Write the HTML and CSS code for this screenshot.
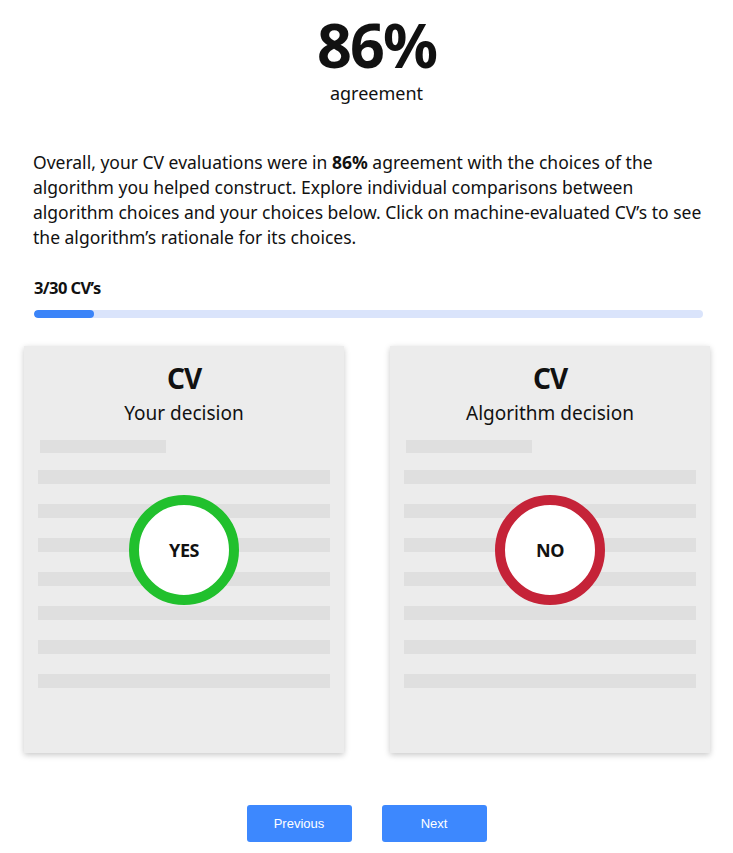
FILE: index.html
```html
<!DOCTYPE html>
<html>
<head>
<meta charset="utf-8">
<link rel="stylesheet" href="styles.css">
</head>
<body>
<div class="page">
  <header class="score">
    <div class="score-value">86%</div>
    <div class="score-label">agreement</div>
  </header>
  <p class="summary">Overall, your CV evaluations were in <b>86%</b> agreement with the choices of the algorithm you helped construct. Explore individual comparisons between algorithm choices and your choices below. Click on machine-evaluated CV’s to see the algorithm’s rationale for its choices.</p>
  <section class="progress">
    <div class="progress-label">3/30 CV’s</div>
    <div class="progress-track"><div class="progress-fill" style="width:9%"></div></div>
  </section>
  <section class="cards">
    <div class="card">
      <div class="card-title">CV</div>
      <div class="card-sub">Your decision</div>
      <div class="line short"></div>
      <div class="lines">
        <div class="line"></div><div class="line"></div><div class="line"></div><div class="line"></div><div class="line"></div><div class="line"></div><div class="line"></div>
      </div>
      <div class="badge yes">YES</div>
    </div>
    <div class="card">
      <div class="card-title">CV</div>
      <div class="card-sub">Algorithm decision</div>
      <div class="line short"></div>
      <div class="lines">
        <div class="line"></div><div class="line"></div><div class="line"></div><div class="line"></div><div class="line"></div><div class="line"></div><div class="line"></div>
      </div>
      <div class="badge no">NO</div>
    </div>
  </section>
  <nav class="buttons">
    <button class="btn">Previous</button>
    <button class="btn">Next</button>
  </nav>
</div>
</body>
</html>
```
FILE: styles.css
```css
* { box-sizing: border-box; }
body {
  margin: 0;
  font-family: "Noto Sans", "Lato", sans-serif;
  color: #111;
  background: #fff;
}
.page { width: 733px; }
.score { text-align: center; padding: 8px 0 0 20px; }
.score-value {
  font-size: 61px;
  font-weight: 700;
  line-height: 74px;
  letter-spacing: -2px;
}
.score-label { font-size: 18px; line-height: 22px; }
.summary {
  margin: 46px 30px 0 33px;
  font-size: 17.5px;
  line-height: 25px;
}
.progress { padding: 27px 30px 0 34px; }
.progress-label { font-size: 16.5px; font-weight: 700; line-height: 22px; letter-spacing: -0.6px; }
.progress-track {
  margin-top: 11px;
  height: 8px;
  border-radius: 4px;
  background: #dae4fb;
  overflow: hidden;
}
.progress-fill { height: 100%; background: #3b84f8; border-radius: 4px; }
.cards {
  display: flex;
  gap: 46px;
  padding: 28px 0 0 24px;
}
.card {
  position: relative;
  width: 320px;
  height: 407px;
  background: #ececec;
  box-shadow: 0 2px 6px rgba(0,0,0,0.22);
  padding: 16px 14px 0 14px;
  text-align: center;
}
.card-title { font-size: 28px; font-weight: 700; line-height: 32px; letter-spacing: -1px; }
.card-sub { font-size: 19px; line-height: 26px; margin-top: 6px; }
.line { height: 14px; background: #dfdfdf; }
.line.short { width: 126px; height: 13px; margin: 14px 0 0 2px; }
.lines { display: flex; flex-direction: column; gap: 20px; margin-top: 17px; }
.badge {
  position: absolute;
  left: 50%;
  top: 204px;
  transform: translate(-50%, -50%);
  width: 110px;
  height: 110px;
  border-radius: 50%;
  background: #fff;
  display: flex;
  align-items: center;
  justify-content: center;
  font-size: 18px;
  font-weight: 700;
  letter-spacing: -0.5px;
  border: 10px solid;
}
.badge.yes { border-color: #21c02d; }
.badge.no { border-color: #c52338; }
.buttons {
  display: flex;
  justify-content: center;
  gap: 30px;
  padding: 52px 0 0 0;
}
.btn {
  width: 105px;
  height: 37px;
  border: none;
  border-radius: 3px;
  background: #3d88fe;
  color: #fff;
  font-family: "Liberation Sans", Arial, sans-serif;
  font-size: 13px;
}
```
